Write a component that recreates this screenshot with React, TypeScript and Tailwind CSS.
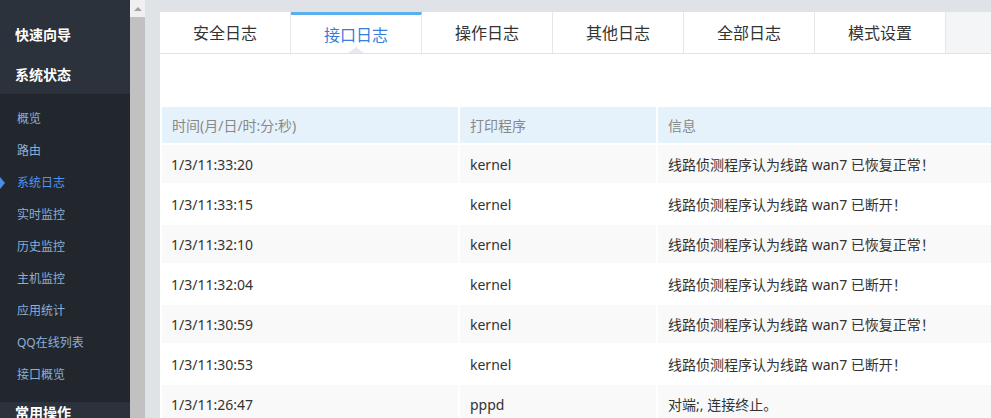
import React from 'react';

const font = { fontFamily: '"Noto Sans", "Noto Sans CJK SC", sans-serif' };

const menuItems = ['概览', '路由', '系统日志', '实时监控', '历史监控', '主机监控', '应用统计', 'QQ在线列表', '接口概览'];

const tabs = ['安全日志', '接口日志', '操作日志', '其他日志', '全部日志', '模式设置'];

const rows = [
	['1/3/11:33:20', 'kernel', '线路侦测程序认为线路 wan7 已恢复正常！'],
	['1/3/11:33:15', 'kernel', '线路侦测程序认为线路 wan7 已断开！'],
	['1/3/11:32:10', 'kernel', '线路侦测程序认为线路 wan7 已恢复正常！'],
	['1/3/11:32:04', 'kernel', '线路侦测程序认为线路 wan7 已断开！'],
	['1/3/11:30:59', 'kernel', '线路侦测程序认为线路 wan7 已恢复正常！'],
	['1/3/11:30:53', 'kernel', '线路侦测程序认为线路 wan7 已断开！'],
	['1/3/11:26:47', 'pppd', '对端;, 连接终止。'],
];

const Sidebar = () => (
	<div className="w-[130px] shrink-0 flex flex-col bg-[#22272e]">
		<div className="bg-[#2c323c] pt-[14px]">
			<div className="h-[40px] flex items-center pl-[15px] text-[14px] font-bold text-white">快速向导</div>
			<div className="h-[40px] flex items-center pl-[15px] text-[14px] font-bold text-white">系统状态</div>
		</div>
		<div className="pt-[9px] pb-[11px]">
			{menuItems.map((item) => {
				const active = item === '系统日志';
				return (
					<div key={item} className="relative h-[32px] flex items-center pl-[17px]">
						{active && (
							<span className="absolute left-0 top-[10px] w-0 h-0 border-y-[6px] border-y-transparent border-l-[5px] border-l-[#4a8ee8]" />
						)}
						<span className={active ? 'text-[12px] text-[#4d94f4]' : 'text-[12px] text-[#8daed6]'}>{item}</span>
					</div>
				);
			})}
		</div>
		<div className="bg-[#2c323c] h-[40px] flex items-center pl-[15px] text-[14px] font-bold text-white">常用操作</div>
	</div>
);

const Scrollbar = () => (
	<div className="w-[15px] shrink-0 flex flex-col bg-[#f0f0f0]">
		<div className="h-[17px] flex items-center justify-center">
			<span className="w-0 h-0 border-x-[4px] border-x-transparent border-b-[4px] border-b-[#a3a3a3]" />
		</div>
		<div className="flex-1 bg-[#c1c1c1]" />
	</div>
);

const Tabs = () => (
	<div className="flex h-[42px] border-b border-[#e0e3e8]">
		{tabs.map((tab) => {
			const active = tab === '接口日志';
			return (
				<div
					key={tab}
					className={
						active
							? 'relative w-[131px] shrink-0 border-r border-[#e3e6ea] border-t-[3px] border-t-[#5aafee] flex items-center justify-center pt-[2px] text-[16px] text-[#3a7ddb]'
							: 'w-[131px] shrink-0 border-r border-[#e3e6ea] flex items-center justify-center text-[16px] text-[#333]'
					}
				>
					{tab}
					{active && (
						<span className="absolute bottom-0 left-1/2 -translate-x-1/2 w-0 h-0 border-x-[8px] border-x-transparent border-b-[6px] border-b-[#e6e9ee]" />
					)}
				</div>
			);
		})}
		<div className="flex-1 bg-[#f4f5f7]" />
	</div>
);

const LogTable = () => (
	<table className="w-[850px] table-fixed border-separate border-spacing-[2px] text-[14px]">
		<colgroup>
			<col className="w-[296px]" />
			<col className="w-[196px]" />
			<col />
		</colgroup>
		<thead>
			<tr className="h-[36px] bg-[#e6f2fb] text-[#888]">
				<th className="text-left font-normal pl-[10px]">时间(月/日/时:分:秒)</th>
				<th className="text-left font-normal pl-[10px]">打印程序</th>
				<th className="text-left font-normal pl-[10px]">信息</th>
			</tr>
		</thead>
		<tbody>
			{rows.map((row, i) => (
				<tr key={i} className={i % 2 === 0 ? 'h-[38px] bg-[#f9f9f9] text-[#333]' : 'h-[38px] bg-white text-[#333]'}>
					{row.map((cell, j) => (
						<td key={j} className={j === 0 ? 'pl-[9px] whitespace-nowrap' : 'pl-[10px] whitespace-nowrap'}>{cell}</td>
					))}
				</tr>
			))}
		</tbody>
	</table>
);

export default function App() {
	return (
		<div className="w-[991px] h-[418px] overflow-hidden flex" style={font}>
			<Sidebar />
			<Scrollbar />
			<div className="flex-1 min-w-0 bg-[#dfe3e8] pl-[15px] pt-[12px] flex">
				<div className="flex-1 min-w-0 bg-white overflow-hidden">
					<Tabs />
					<div className="pt-[51px]">
						<LogTable />
					</div>
				</div>
			</div>
		</div>
	);
}
